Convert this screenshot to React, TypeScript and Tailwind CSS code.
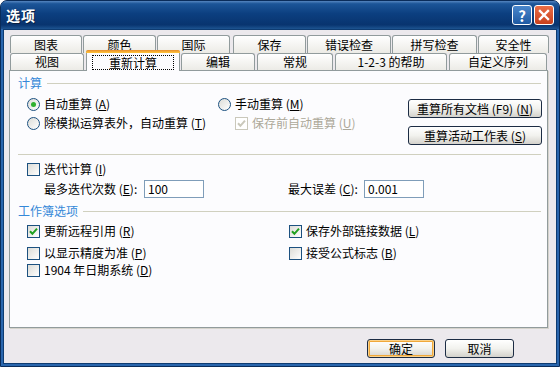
import React from 'react';

const Mn = ({ c }: { c: string }) => (
  <>
    (<span className="underline underline-offset-1">{c}</span>)
  </>
);

const Check = ({ checked, disabled }: { checked?: boolean; disabled?: boolean }) => (
  <span
    className={
      disabled
        ? 'w-[13px] h-[13px] shrink-0 border border-[#cac8bb] bg-white flex items-center justify-center'
        : 'w-[13px] h-[13px] shrink-0 border border-[#1c5180] bg-linear-to-br from-[#dcdcd7] to-white flex items-center justify-center'
    }
  >
    {checked && (
      <svg width="9" height="9" viewBox="0 0 9 9">
        <path d="M1 4.2 L3.4 6.8 L8 1.6" stroke={disabled ? '#cac8bb' : '#21a121'} strokeWidth="2" fill="none" />
      </svg>
    )}
  </span>
);

const Radio = ({ checked }: { checked?: boolean }) => (
  <span className="w-[13px] h-[13px] shrink-0 rounded-full border border-[#1c5180] bg-linear-to-br from-[#dcdcd7] to-white flex items-center justify-center">
    {checked && <span className="w-[5px] h-[5px] rounded-full bg-[#2fb02f]" />}
  </span>
);

const Tab = ({ label, w }: { label: string; w: string }) => (
  <div
    className={`${w} h-full border border-b-0 border-[#919b9c] rounded-t-[3px] bg-linear-to-b from-white to-[#ecebe6] flex items-center justify-center leading-none`}
  >
    {label}
  </div>
);

const Btn = ({ children, w, def }: { children: React.ReactNode; w: string; def?: boolean }) => (
  <div
    className={`${w} h-[19px] rounded-[3px] border border-[#1c2c44] bg-linear-to-b from-white via-[#f2f2ee] to-[#d4d2cc] flex items-center justify-center leading-none ${
      def ? 'shadow-[inset_0_0_0_1px_#fbd28a,inset_0_0_0_2px_#f0a83a]' : ''
    }`}
  >
    {children}
  </div>
);

const GroupLabel = ({ text }: { text: string }) => (
  <div className="flex items-center h-[16px]">
    <span className="text-[#3588d8]">{text}</span>
    <div className="flex-1 h-px bg-[#d0d0bf] ml-[5px]" />
  </div>
);

export default function App() {
  return (
    <div className="w-[560px] h-[367px] flex flex-col bg-[#2a66ad] border border-[#0a2c5a] rounded-t-[7px] overflow-hidden text-[12px] text-black font-['Noto_Sans_CJK_SC','Liberation_Sans',sans-serif]">
      {/* title bar */}
      <div className="h-[28px] shrink-0 flex items-center pl-[5px] pr-[5px] bg-[linear-gradient(to_bottom,#5586c0_0%,#1c5598_10%,#0c3f80_45%,#08346f_85%,#1d5491_100%)]">
        <span className="text-white font-bold text-[14px] tracking-[1px] [text-shadow:1px_1px_0_#0a1f3f]">选项</span>
        <div className="ml-auto flex gap-[2px]">
          <div className="w-[20px] h-[20px] rounded-[3px] border border-white bg-linear-to-b from-[#4a87cc] to-[#1d5aa3] flex items-center justify-center text-white font-bold text-[15px] leading-none">
            ?
          </div>
          <div className="w-[20px] h-[20px] rounded-[3px] border border-white bg-linear-to-b from-[#ea6e46] to-[#c8401c] flex items-center justify-center">
            <svg width="12" height="12" viewBox="0 0 12 12">
              <path d="M2 2 L10 10 M10 2 L2 10" stroke="white" strokeWidth="2.4" strokeLinecap="square" />
            </svg>
          </div>
        </div>
      </div>

      {/* body */}
      <div className="flex-1 mx-[2px] mb-[2px] border border-[#0e3c72] bg-[#ece9ed] flex flex-col pt-[5px]">
        {/* tabs row 1 */}
        <div className="flex h-[18px] ml-[6px] gap-[1px]">
          <Tab label="图表" w="w-[72px]" />
          <Tab label="颜色" w="w-[73px]" />
          <Tab label="国际" w="w-[73px]" />
          <div className="w-[1px]" />
          <Tab label="保存" w="w-[73px]" />
          <Tab label="错误检查" w="w-[84px]" />
          <Tab label="拼写检查" w="w-[85px]" />
          <Tab label="安全性" w="w-[71px]" />
        </div>
        {/* tabs row 2 */}
        <div className="flex h-[17px] ml-[6px] items-end">
          <Tab label="视图" w="w-[74px]" />
          <div className="relative z-10 ml-[2px] w-[94px] h-[21px] -mb-px border-x border-[#919b9c] rounded-t-[3px] bg-[#fcfcfe] flex flex-col">
            <div className="h-[3px] rounded-t-[2px] bg-linear-to-b from-[#e68b2c] to-[#ffc73c] -mx-px" />
            <div className="flex-1 flex items-center justify-center">
              <span className="border border-dotted border-black px-[16px] leading-[13px]">重新计算</span>
            </div>
          </div>
          <div className="w-[1px]" />
          <Tab label="编辑" w="w-[74px]" />
          <div className="w-[2px]" />
          <Tab label="常规" w="w-[76px]" />
          <div className="w-[2px]" />
          <Tab label="1-2-3 的帮助" w="w-[112px]" />
          <div className="w-[2px]" />
          <Tab label="自定义序列" w="w-[98px]" />
        </div>

        {/* panel */}
        <div className="ml-[5px] w-[539px] h-[258px] border border-[#919b9c] bg-[#fcfcfe] shadow-[1px_1px_0_#d5d3cc] pl-[8px] pr-[6px] pt-[4px] leading-[16px]">
          <GroupLabel text="计算" />
          <div className="flex items-start">
            <div className="ml-[9px] mt-[5px] grid grid-cols-[191px_auto] gap-y-[3px]">
              <div className="flex items-center gap-[4px] h-[16px]">
                <Radio checked />
                <span>自动重算 <Mn c="A" /></span>
              </div>
              <div className="flex items-center gap-[4px] h-[16px]">
                <Radio />
                <span>手动重算 <Mn c="M" /></span>
              </div>
              <div className="flex items-center gap-[4px] h-[16px]">
                <Radio />
                <span>除模拟运算表外，自动重算 <Mn c="T" /></span>
              </div>
              <div className="flex items-center gap-[4px] h-[16px] pl-[17px] text-[#aca899]">
                <Check checked disabled />
                <span>保存前自动重算 <Mn c="U" /></span>
              </div>
            </div>
            <div className="ml-auto mr-[-1px] mt-[8px] flex flex-col gap-[8px]">
              <Btn w="w-[134px]">
                重算所有文档 (F9) <span className="ml-[3px]"><Mn c="N" /></span>
              </Btn>
              <Btn w="w-[134px]">
                重算活动工作表 <Mn c="S" />
              </Btn>
            </div>
          </div>
          <div className="mt-[9px] h-px bg-[#d0d0bf]" />
          <div className="mt-[6px] ml-[9px] flex items-center gap-[4px] h-[16px]">
            <Check />
            <span>迭代计算 <Mn c="I" /></span>
          </div>
          <div className="mt-[3px] flex items-center h-[18px]">
            <div className="ml-[26px] w-[244px] flex items-center">
              <span className="w-[100px]">最多迭代次数 <Mn c="E" />:</span>
              <div className="w-[60px] h-[18px] border border-[#7f9db9] bg-white pl-[3px] flex items-center">100</div>
            </div>
            <span className="w-[76px]">最大误差 <Mn c="C" />:</span>
            <div className="w-[60px] h-[18px] border border-[#7f9db9] bg-white pl-[3px] flex items-center">0.001</div>
          </div>
          <div className="mt-[5px]">
            <GroupLabel text="工作簿选项" />
          </div>
          <div className="ml-[9px] grid grid-cols-[262px_auto]">
            <div className="mt-[4px] flex items-center gap-[4px] h-[16px]">
              <Check checked />
              <span>更新远程引用 <Mn c="R" /></span>
            </div>
            <div className="mt-[4px] flex items-center gap-[4px] h-[16px]">
              <Check checked />
              <span>保存外部链接数据 <Mn c="L" /></span>
            </div>
            <div className="mt-[6px] flex items-center gap-[4px] h-[16px]">
              <Check />
              <span>以显示精度为准 <Mn c="P" /></span>
            </div>
            <div className="mt-[6px] flex items-center gap-[4px] h-[16px]">
              <Check />
              <span>接受公式标志 <Mn c="B" /></span>
            </div>
            <div className="mt-[1px] flex items-center gap-[4px] h-[16px]">
              <Check />
              <span>1904 年日期系统 <Mn c="D" /></span>
            </div>
          </div>
        </div>

        {/* bottom buttons */}
        <div className="mt-[11px] flex justify-end gap-[10px] mr-[42px]">
          <Btn w="w-[68px]" def>
            确定
          </Btn>
          <Btn w="w-[69px]">取消</Btn>
        </div>
      </div>
    </div>
  );
}
